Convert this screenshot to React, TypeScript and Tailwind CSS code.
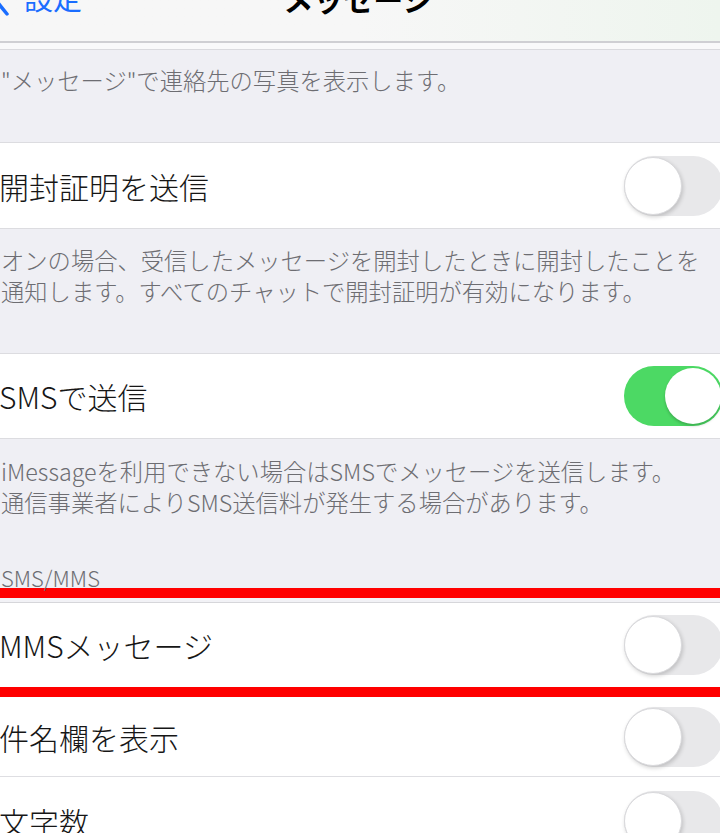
import React from "react";

const Toggle: React.FC<{ on?: boolean }> = ({ on }) =>
  on ? (
    <div className="flex h-[60px] w-[99px] shrink-0 items-center justify-end rounded-full bg-[#4cd964] p-[2px]">
      <div className="h-[56px] w-[56px] rounded-full bg-white shadow-[0_2px_3px_rgba(0,0,0,0.2)]" />
    </div>
  ) : (
    <div className="flex h-[60px] w-[99px] shrink-0 items-center justify-start rounded-full bg-[#e8e8ea]">
      <div className="h-[58px] w-[58px] rounded-full border border-[#d9d9dc] bg-white shadow-[1px_2px_4px_rgba(0,0,0,0.18)]" />
    </div>
  );

const Row: React.FC<{ label: string; on?: boolean; h?: string; border?: boolean }> = ({
  label,
  on,
  h = "h-[85px]",
  border,
}) => (
  <div className={`${h} flex items-center justify-between bg-white ${border ? "border-b border-[#dedee2]" : ""}`}>
    <span className="-ml-[1px] text-[30px] font-light leading-none text-[#161616]">{label}</span>
    <div className="-mr-[3px]">
      <Toggle on={on} />
    </div>
  </div>
);

const Footer: React.FC<{ children: React.ReactNode; h: string; pt: string }> = ({ children, h, pt }) => (
  <div className={`${h} ${pt} whitespace-nowrap pl-[1px] text-[23.3px] font-light leading-[31px] text-[#6d6d72]`}>
    {children}
  </div>
);

export default function App() {
  return (
    <div
      className="h-[833px] w-[720px] overflow-hidden bg-[#efeff4]"
      style={{ fontFamily: '"Noto Sans CJK JP", "Noto Sans", sans-serif' }}
    >
      {/* nav bar */}
      <div className="relative flex h-[41px] items-start overflow-hidden bg-gradient-to-r from-[#f7f7f7] via-[#f7f7f7] to-[#eef5ee]">
        <div className="flex items-start">
          <svg width="20" height="36" viewBox="0 0 20 36" className="-ml-[9px] -mt-[19px]">
            <path d="M16 2 L3 17 L16 33" fill="none" stroke="#1a6dff" strokeWidth="3.5" strokeLinecap="round" strokeLinejoin="round" />
          </svg>
          <span className="-mt-[23px] ml-[13px] text-[29px] leading-[40px] text-[#1a6dff]">設定</span>
        </div>
        <div className="absolute left-0 right-0 top-[-22px] text-center">
          <span className="ml-[-4px] text-[30px] font-semibold leading-[40px] text-black">メッセージ</span>
        </div>
      </div>
      <div className="h-[2px] bg-[#cfcfd3]" />
      <div className="h-[7px] border-b border-[#dadade] bg-[#f9f9fa]" />

      <Footer h="h-[92px]" pt="pt-[15px]">"メッセージ"で連絡先の写真を表示します。</Footer>

      <div className="h-[1px] bg-[#dcdce0]" />
      <Row label="開封証明を送信" h="h-[85px]" />
      <div className="h-[1px] bg-[#dcdce0]" />

      <Footer h="h-[124px]" pt="pt-[16px]">
        オンの場合、受信したメッセージを開封したときに開封したことを
        <br />
        通知します。すべてのチャットで開封証明が有効になります。
      </Footer>

      <div className="h-[1px] bg-[#dcdce0]" />
      <Row label="SMSで送信" on h="h-[84px]" />
      <div className="h-[1px] bg-[#dcdce0]" />

      <Footer h="h-[108px]" pt="pt-[17px]">
        iMessageを利用できない場合はSMSでメッセージを送信します。
        <br />
        通信事業者によりSMS送信料が発生する場合があります。
      </Footer>

      <div className="flex h-[41px] items-end pl-[1px] text-[22px] font-light leading-[26px] text-[#6d6d72]">
        <span className="-mb-[2px]">SMS/MMS</span>
      </div>

      <div className="h-[10px] bg-[#ff0000]" />
      <div className="h-[5px] border-b border-[#d6d6da] bg-[#f2f2f6]" />
      <Row label="MMSメッセージ" h="h-[84px]" />
      <div className="h-[10px] bg-[#ff0000]" />
      <Row label="件名欄を表示" h="h-[80px]" border />
      <Row label="文字数" h="h-[88px]" />
    </div>
  );
}
